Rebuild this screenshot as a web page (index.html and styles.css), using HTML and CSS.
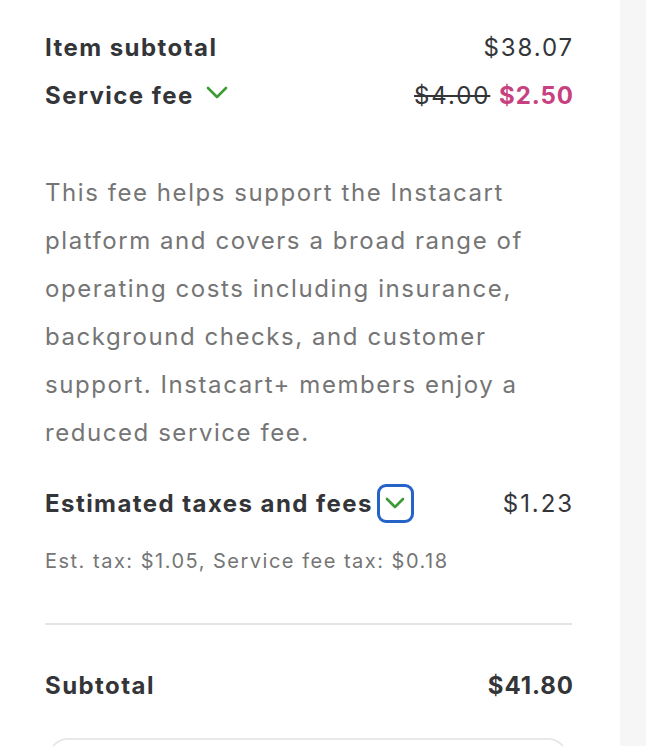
FILE: index.html
```html
<!DOCTYPE html>
<html lang="en">
<head>
  <meta charset="UTF-8" />
  <meta name="viewport" content="width=device-width, initial-scale=1" />
  <title>Order summary</title>
  <link rel="stylesheet" href="styles.css">
</head>
<body>
  <div class="panel">

    <!-- Line items -->
    <div class="row first">
      <span class="label">Item subtotal</span>
      <span class="amount">$38.07</span>
    </div>

    <div class="row">
      <span class="label">Service fee
        <svg class="chev" width="22" height="13" viewBox="0 0 22 13"><path d="M2 2 L11 11 L20 2" fill="none" stroke="#3d9b35" stroke-width="2.6" stroke-linecap="round" stroke-linejoin="round"/></svg>
      </span>
      <span class="amount"><s class="old">$4.00</s> <b class="deal">$2.50</b></span>
    </div>

    <p class="note">
      This fee helps support the Instacart platform and covers a broad range of operating costs including insurance, background checks, and customer support. Instacart+ members enjoy a reduced service fee.
    </p>

    <div class="row taxes">
      <span class="label">Estimated taxes and fees<button class="toggle"><svg width="22" height="13" viewBox="0 0 22 13"><path d="M3 2 L11 10 L19 2" fill="none" stroke="#3d9b35" stroke-width="2.6" stroke-linecap="round" stroke-linejoin="round"/></svg></button></span>
      <span class="amount">$1.23</span>
    </div>
    <div class="sub">Est. tax: $1.05, Service fee tax: $0.18</div>

    <hr class="divider">

    <div class="row total">
      <span class="label">Subtotal</span>
      <span class="amount">$41.80</span>
    </div>

    <div class="promo"></div>
  </div>
</body>
</html>
```

FILE: styles.css
```css
* {
  box-sizing: border-box;
}
body {
  margin: 0;
  background: #f6f6f6;
  font-family: 'Inter', 'Roboto', sans-serif;
  color: #343538;
  height: 746px;
  overflow: hidden;
}

.panel {
  width: 620px;
  height: 100%;
  overflow: hidden;
  background: #fff;
  padding: 23px 48px 0 45px;
}

.row {
  display: flex;
  justify-content: space-between;
  align-items: center;
  height: 48px;
  font-size: 24px;
  letter-spacing: 0.06em;
}

.label {
  font-weight: 700;
  display: flex;
  align-items: center;
}

.amount {
  font-weight: 400;
  letter-spacing: 0.08em;
  margin-right: -2px;
}

.chev {
  margin-left: 12px;
  margin-top: -6px;
}

.old {
  text-decoration-thickness: 2px;
}
.deal {
  color: #c7407f;
  font-weight: 700;
  letter-spacing: 0.04em;
}

.note {
  margin: 50px 0 0;
  font-size: 24px;
  line-height: 48px;
  letter-spacing: 0.065em;
  color: #757575;
}

.taxes {
  margin-top: 22px;
}

.toggle {
  width: 37px;
  height: 39px;
  margin-left: 4px;
  padding: 0;
  border: 3px solid #2563c9;
  border-radius: 9px;
  background: #fff;
  display: flex;
  align-items: center;
  justify-content: center;
}

.sub {
  font-size: 20px;
  line-height: 30px;
  letter-spacing: 0.075em;
  color: #757575;
  margin-top: 19px;
}

.divider {
  border: 0;
  border-top: 2px solid #e4e4e4;
  margin: 47px 0 0;
}

.total {
  margin-top: 36px;
}
.total .amount {
  font-weight: 700;
  letter-spacing: 0.04em;
}

.promo {
  margin: 29px 4px 0 3px;
  height: 40px;
  border: 2px solid #e8e8e8;
  border-radius: 24px;
}
```
